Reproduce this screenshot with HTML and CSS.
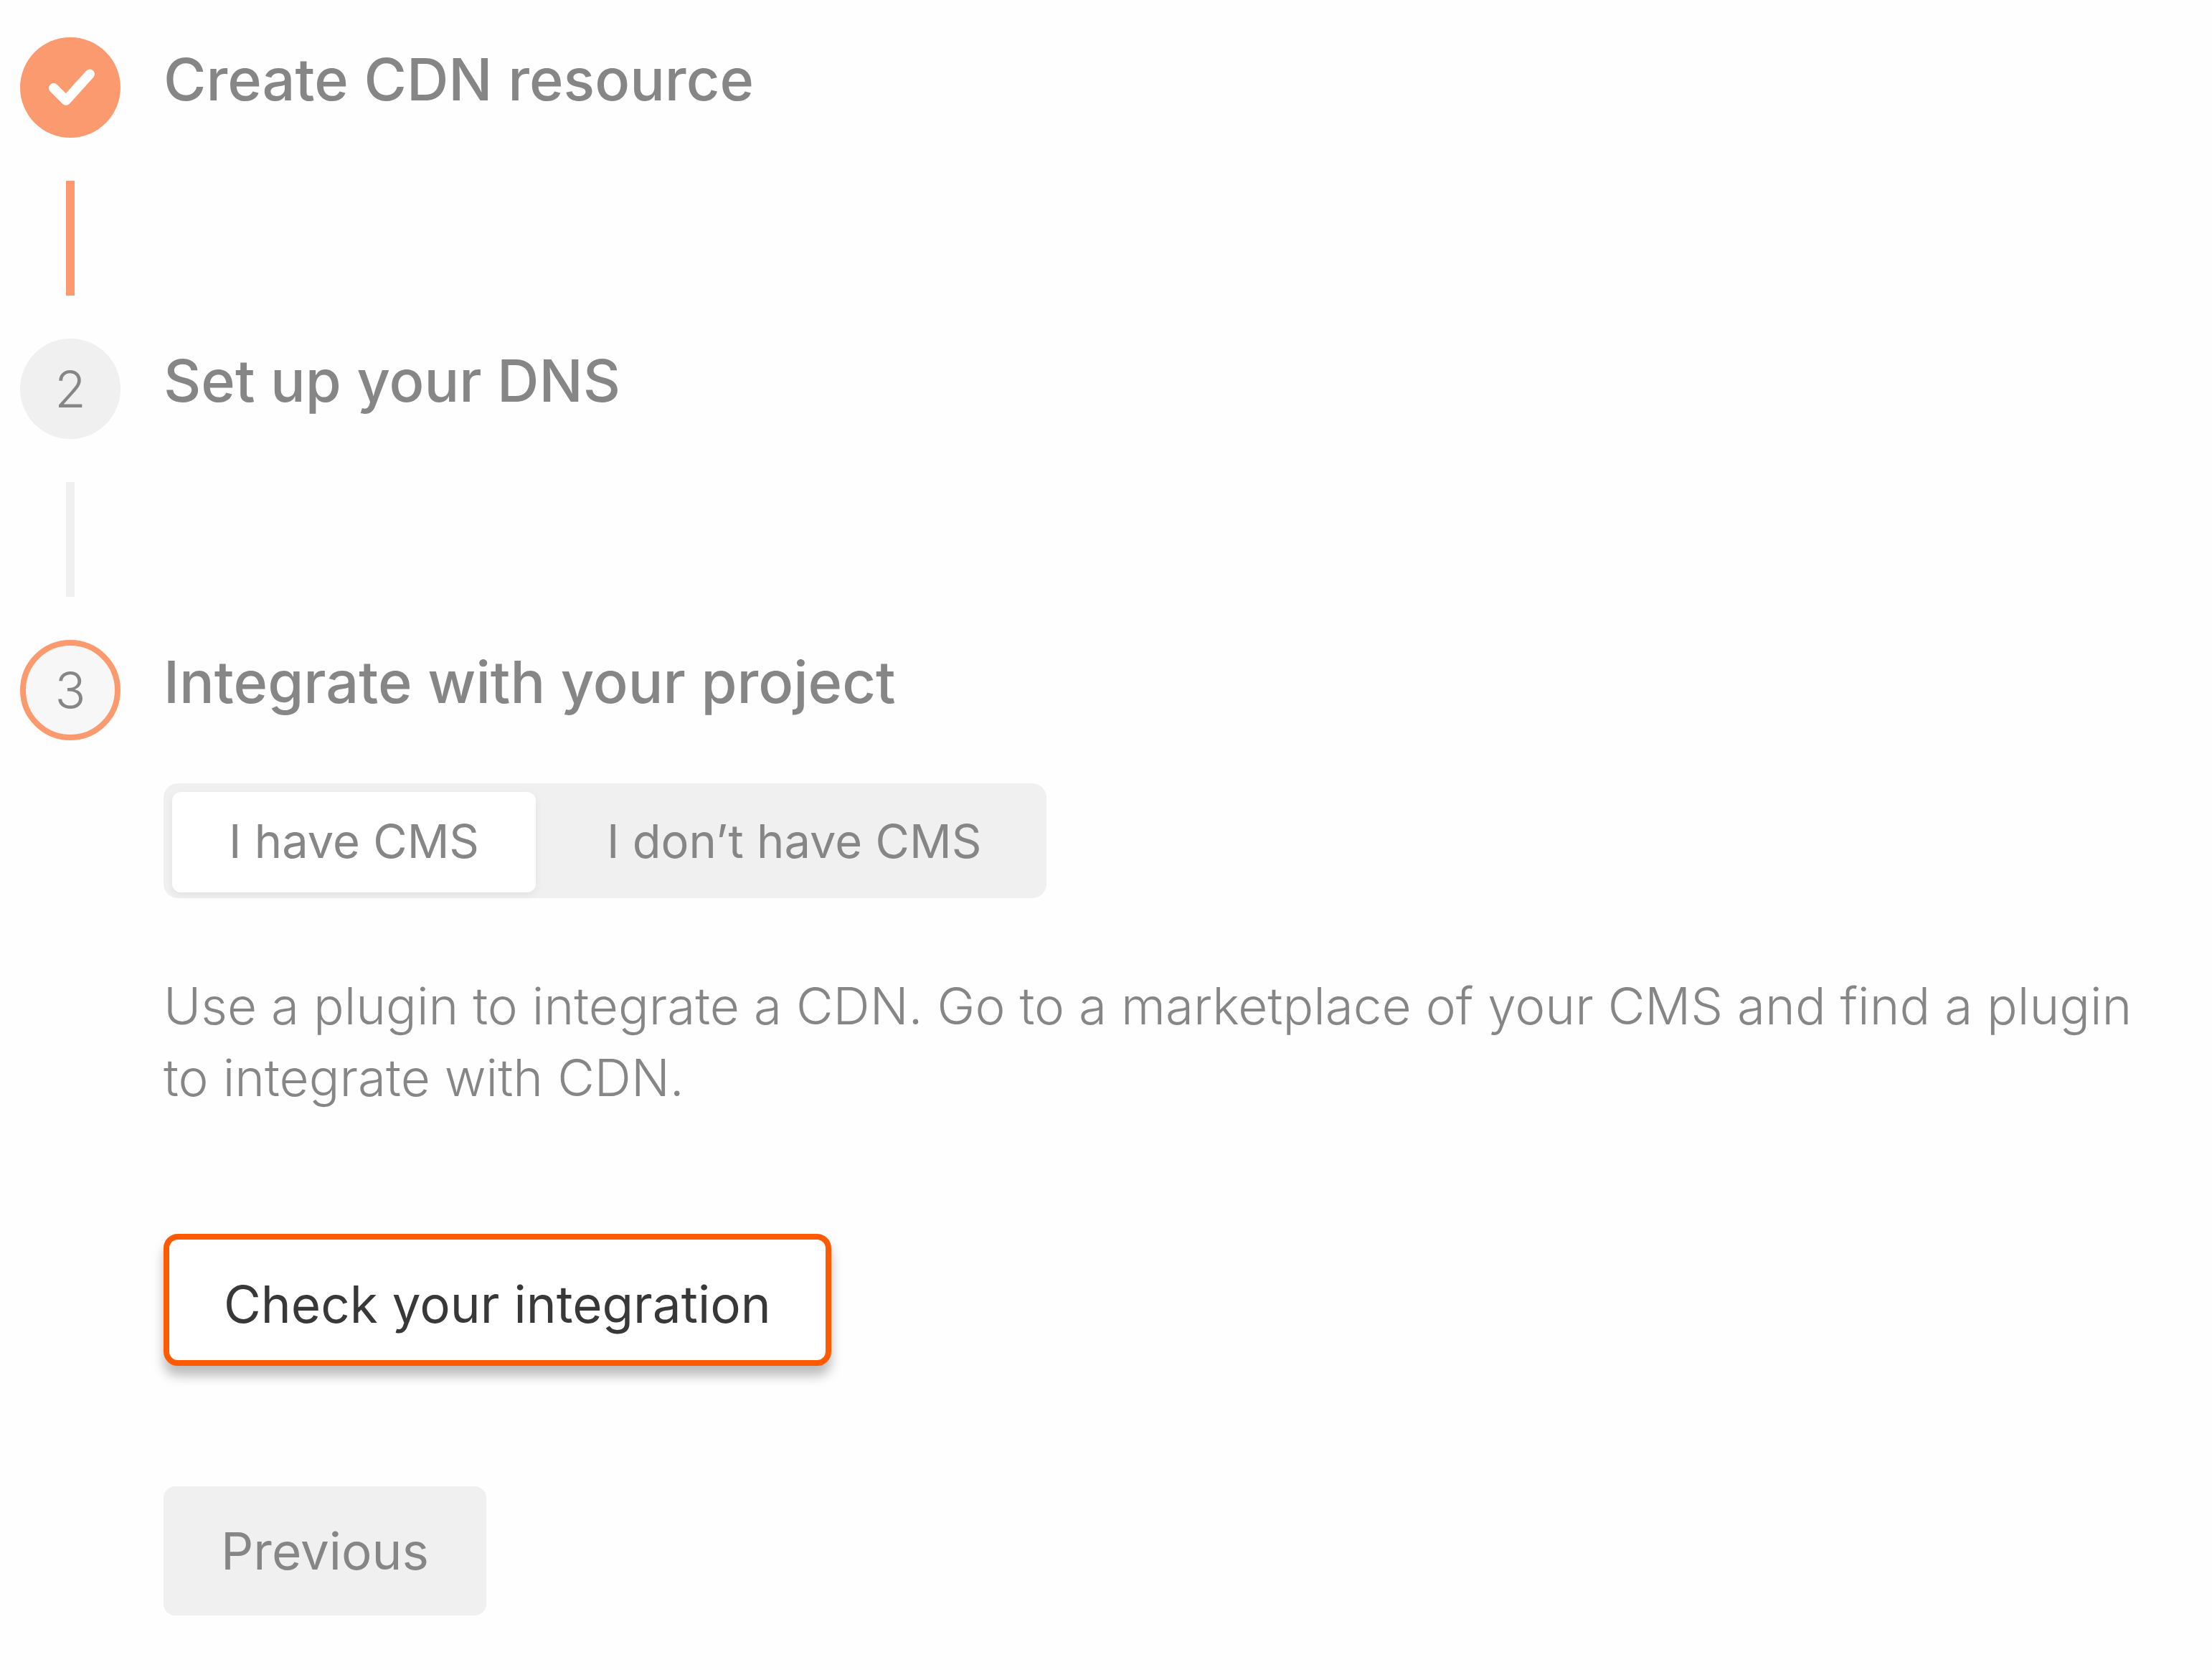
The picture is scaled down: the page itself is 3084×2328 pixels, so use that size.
FILE: index.html
```html
<!DOCTYPE html>
<html lang="en">
<head>
<meta charset="utf-8">
<meta name="viewport" content="width=device-width, initial-scale=1">
<title>CDN setup</title>
<link rel="stylesheet" href="styles.css">
</head>
<body>
<main>
  <ol class="steps">
    <li class="step">
      <div class="rail">
        <span class="marker marker-done">
          <svg class="check" viewBox="0 0 35 35" role="img" aria-label="Done"><path d="M11.7 17.7L16 22L24.3 12.8" fill="none" stroke="currentColor" stroke-width="3.4" stroke-linecap="round" stroke-linejoin="round"/></svg>
        </span>
        <span class="line line-done"></span>
      </div>
      <div class="content"><h2 class="title">Create CDN resource</h2></div>
    </li>
    <li class="step">
      <div class="rail">
        <span class="marker">2</span>
        <span class="line"></span>
      </div>
      <div class="content"><h2 class="title">Set up your DNS</h2></div>
    </li>
    <li class="step">
      <div class="rail">
        <span class="marker marker-current">3</span>
      </div>
      <div class="content">
        <h2 class="title">Integrate with your project</h2>
        <div class="tabs" role="tablist">
          <button class="tab tab-active" type="button" role="tab" aria-selected="true">I have CMS</button>
          <button class="tab" type="button" role="tab" aria-selected="false">I don’t have CMS</button>
        </div>
        <p class="text">Use a plugin to integrate a CDN. Go to a marketplace of your CMS and find a plugin to integrate with CDN.</p>
        <button class="button button-outline" type="button">Check your integration</button>
        <button class="button button-muted" type="button">Previous</button>
      </div>
    </li>
  </ol>
</main>
</body>
</html>
```

FILE: styles.css
```css
* {
  box-sizing: border-box;
}

body {
  margin: 0;
  background: #fefefe;
  color: #868686;
  font-family: Inter, "Liberation Sans", sans-serif;
  font-size: 71px;
}

.steps {
  margin: 0;
  padding: 52px 48px 76px 28px;
  list-style: none;
}

.step {
  display: flex;
  gap: 60px;
}

.rail {
  display: flex;
  flex: none;
  flex-direction: column;
  align-items: center;
}

.marker {
  display: flex;
  align-items: center;
  justify-content: center;
  width: 140px;
  height: 140px;
  border-radius: 50%;
  background: #f0f0f0;
  font-weight: 300;
}

.marker-done {
  background: #fc9a6f;
  color: #fff;
}

.marker-current {
  border: 8px solid #fc9a6f;
  background: #f7f7f7;
}

.check {
  width: 140px;
  height: 140px;
}

.line {
  width: 12px;
  height: 160px;
  margin: 60px 0;
  background: #f0f0f0;
}

.line-done {
  background: #fc9a6f;
}

.content {
  display: flex;
  flex: 1;
  flex-direction: column;
  align-items: flex-start;
  min-width: 0;
}

.title {
  margin: 0;
  font-size: 81px;
  font-weight: 500;
  line-height: 118px;
}

.tabs {
  display: flex;
  gap: 20px;
  margin-top: 82px;
  padding: 12px 12px 8px;
  border-radius: 20px;
  background: #f0f0f0;
}

.tab {
  height: 140px;
  padding: 0 79px 4px;
  border: 0;
  border-radius: 12px;
  background: none;
  color: inherit;
  font: inherit;
  font-size: 65px;
}

.tab-active {
  background: #fff;
  box-shadow: 0 4px 12px rgba(0, 0, 0, 0.06);
}

.text {
  margin: 100px 0 0;
  font-weight: 300;
  line-height: 100px;
}

.button {
  border: 0;
  border-radius: 16px;
  color: inherit;
  font: inherit;
}

.button-outline {
  height: 184px;
  margin-top: 168px;
  padding: 12px 76px 0;
  border: 8px solid #ff5a00;
  border-radius: 20px;
  background: #fff;
  box-shadow: 0 14px 16px rgba(0, 0, 0, 0.26);
  color: #383838;
}

.button-muted {
  height: 180px;
  margin-top: 168px;
  padding: 0 80px;
  background: #f0f0f0;
}
```
